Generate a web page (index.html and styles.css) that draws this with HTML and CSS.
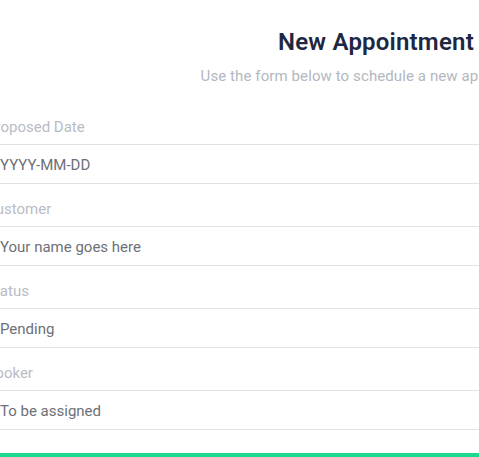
FILE: index.html
```html
<!DOCTYPE html>
<html lang="en">
<head>
<meta charset="utf-8">
<title>New Appointment</title>
<link rel="stylesheet" href="styles.css">
</head>
<body>
<main class="page">
  <header class="head">
    <h1 class="title">New Appointment</h1>
    <p class="subtitle">Use the form below to schedule a new appointment.</p>
  </header>
  <form class="form">
    <div class="field">
      <label class="label" for="date">Proposed Date</label>
      <input class="input" id="date" type="text" placeholder="YYYY-MM-DD">
    </div>
    <div class="field">
      <label class="label" for="customer">Customer</label>
      <input class="input" id="customer" type="text" placeholder="Your name goes here">
    </div>
    <div class="field">
      <label class="label" for="status">Status</label>
      <input class="input" id="status" type="text" placeholder="Pending">
    </div>
    <div class="field">
      <label class="label" for="booker">Booker</label>
      <input class="input" id="booker" type="text" placeholder="To be assigned">
    </div>
    <button class="submit" type="button">Schedule</button>
  </form>
</main>
</body>
</html>
```
FILE: styles.css
```css
html, body {
  margin: 0;
  padding: 0;
  background: #ffffff;
  overflow: hidden;
}
body {
  font-family: Roboto, "Liberation Sans", Arial, sans-serif;
}
.page {
  width: 780px;
  margin-left: -14px;
  box-sizing: border-box;
}
.head {
  text-align: center;
  padding-top: 27px;
}
.title {
  margin: 0;
  font-size: 24px;
  line-height: 30px;
  font-weight: 600;
  color: #1e2742;
  letter-spacing: 0.2px;
}
.subtitle {
  margin: 9px 0 0;
  font-size: 15px;
  line-height: 20px;
  color: #b3b7c0;
  letter-spacing: 0.1px;
}
.form {
  display: flex;
  flex-direction: column;
  padding-top: 31px;
}
.field {
  display: flex;
  flex-direction: column;
}
.label {
  display: block;
  margin-top: 15px;
  margin-bottom: 7px;
  font-size: 15px;
  line-height: 20px;
  color: #b9bcc4;
}
.field:first-child .label {
  margin-top: 0;
}
.input {
  height: 40px;
  box-sizing: border-box;
  border: 0;
  border-top: 1px solid #e2e2e5;
  border-bottom: 1px solid #e2e2e5;
  padding: 2px 0 0 14px;
  margin: 0;
  font-family: inherit;
  font-size: 15px;
  color: #6d7077;
  background: transparent;
  outline: none;
}
.input::placeholder {
  color: #6d7077;
  opacity: 1;
}
.submit {
  margin-top: 23px;
  height: 44px;
  border: 0;
  background: #1bd98f;
  color: #ffffff;
  font-family: inherit;
  font-size: 15px;
}
```
